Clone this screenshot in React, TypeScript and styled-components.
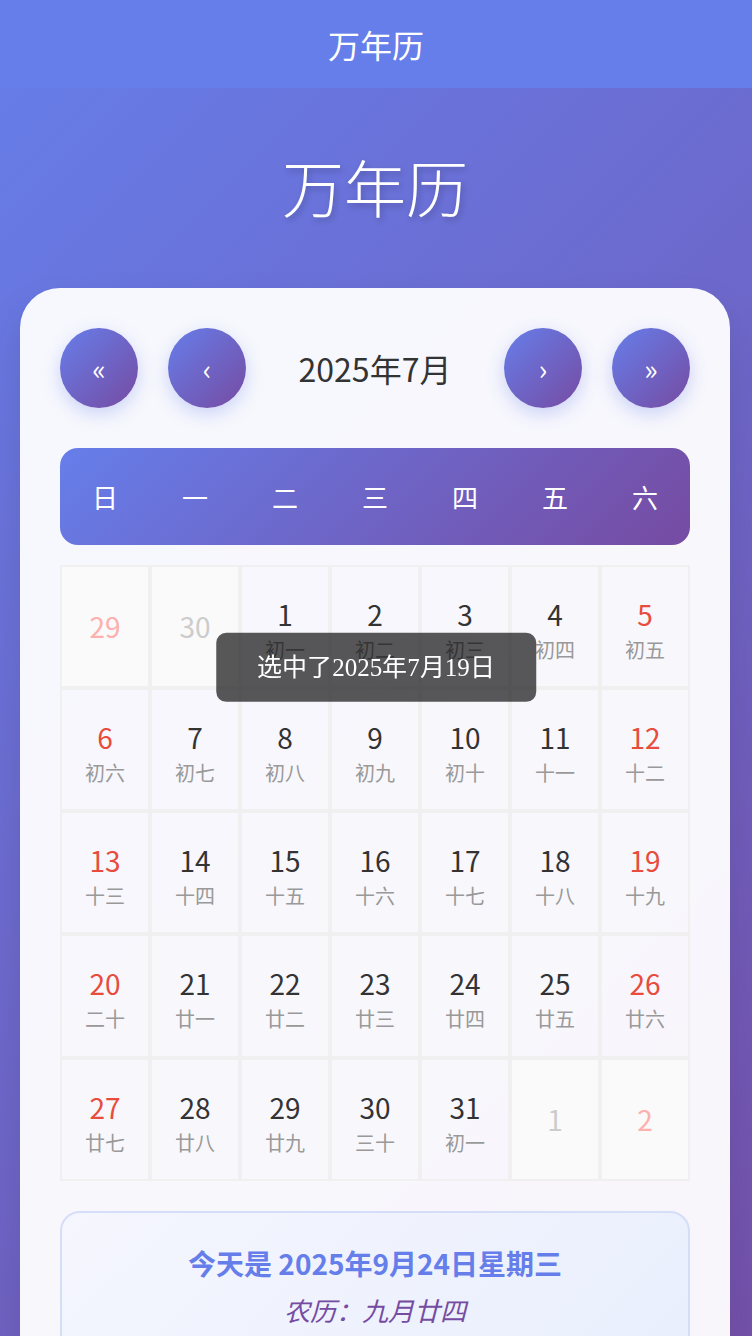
import React from "react";
import styled, { createGlobalStyle } from "styled-components";

const Global = createGlobalStyle`
  html, body {
    margin: 0;
    padding: 0;
  }
  body {
    font-family: "Noto Sans CJK SC", "Noto Sans", sans-serif;
    background: linear-gradient(135deg, #667eea 0%, #764ba2 100%);
    min-height: 100vh;
  }
  * { box-sizing: border-box; }
`;

const Page = styled.div`
  min-height: 100vh;
  display: flex;
  flex-direction: column;
`;

const TopBar = styled.header`
  height: 88px;
  background: #667eea;
  display: flex;
  align-items: center;
  justify-content: center;
  color: #fff;
  font-family: "Liberation Serif", serif;
  font-size: 32px;
`;

const Main = styled.main`
  width: 750px;
  padding: 0 20px 222px;
`;

const Title = styled.h1`
  margin: 0;
  padding: 55px 0 58px;
  text-align: center;
  color: #fff;
  font-size: 62px;
  line-height: 1.4;
  font-weight: 300;
  text-shadow: 2px 3px 6px rgba(0, 0, 0, 0.22);
`;

const Card = styled.section`
  background: rgba(255, 255, 255, 0.95);
  border-radius: 40px;
  padding: 40px;
  box-shadow: 0 20px 40px rgba(0, 0, 0, 0.1);
`;

const NavRow = styled.div`
  display: flex;
  align-items: center;
  justify-content: space-between;
  height: 80px;
`;

const NavGroup = styled.div`
  display: flex;
  gap: 30px;
`;

const NavButton = styled.button`
  width: 78px;
  height: 80px;
  border-radius: 50%;
  border: none;
  padding: 0;
  background: linear-gradient(135deg, #667eea 0%, #764ba2 100%);
  color: #fff;
  font-family: "Noto Sans CJK SC", sans-serif;
  font-size: 28px;
  display: flex;
  align-items: center;
  justify-content: center;
  box-shadow: 0 6px 18px rgba(102, 126, 234, 0.3);
  cursor: pointer;
`;

const MonthTitle = styled.div`
  font-size: 32px;
  color: #333;
`;

const WeekBar = styled.div`
  margin-top: 40px;
  display: grid;
  grid-template-columns: repeat(7, 1fr);
  padding: 30px 0;
  border-radius: 18px;
  background: linear-gradient(135deg, #667eea 0%, #764ba2 100%);
  color: #fff;
  font-size: 26px;
  text-align: center;
`;

const DayGrid = styled.div`
  margin-top: 20px;
  display: grid;
  grid-template-columns: repeat(7, 1fr);
  grid-auto-rows: 123.2px;
`;

const Cell = styled.div<{ $other?: boolean }>`
  border: 2px solid #f0f0f0;
  background: ${(p) => (p.$other ? "#fafafa" : "transparent")};
  padding-top: ${(p) => (p.$other ? "0" : "5px")};
  display: flex;
  flex-direction: column;
  align-items: center;
  justify-content: center;
`;

const DayNum = styled.div<{ $tone: "normal" | "weekend" | "other" | "otherWeekend" }>`
  font-size: 28px;
  line-height: 40px;
  color: ${(p) =>
    p.$tone === "weekend"
      ? "#e74c3c"
      : p.$tone === "other"
      ? "#cccccc"
      : p.$tone === "otherWeekend"
      ? "#fdb0ad"
      : "#333"};
`;

const Lunar = styled.div`
  margin-top: 1px;
  font-size: 20px;
  line-height: 29px;
  color: #999;
`;

const InfoBox = styled.div`
  margin-top: 30px;
  border: 2px solid #d6ddf8;
  border-radius: 20px;
  padding: 30px;
  background: linear-gradient(135deg, #f5f6fe 0%, #e9effd 100%);
  text-align: center;
`;

const TodayLine = styled.div`
  font-size: 28px;
  font-weight: 700;
  color: #667eea;
  line-height: 40px;
`;

const LunarLine = styled.div`
  margin-top: 8px;
  font-size: 26px;
  font-style: italic;
  color: #764ba2;
  line-height: 38px;
`;

const Toast = styled.div`
  position: fixed;
  left: 50%;
  top: 50%;
  transform: translate(-50%, -51%);
  background: rgba(0, 0, 0, 0.65);
  color: #fff;
  border-radius: 10px;
  padding: 17px 41px;
  font-family: "Liberation Serif", serif;
  font-size: 25px;
  line-height: 35px;
  white-space: nowrap;
`;

type Day = { d: number; lunar?: string; other?: boolean; col: number };

const lunarJuly = [
  "初一", "初二", "初三", "初四", "初五", "初六", "初七", "初八", "初九", "初十",
  "十一", "十二", "十三", "十四", "十五", "十六", "十七", "十八", "十九", "二十",
  "廿一", "廿二", "廿三", "廿四", "廿五", "廿六", "廿七", "廿八", "廿九", "三十", "初一",
];

const days: Day[] = [];
[29, 30].forEach((d, i) => days.push({ d, other: true, col: i }));
for (let i = 1; i <= 31; i++) {
  days.push({ d: i, lunar: lunarJuly[i - 1], col: (i + 1) % 7 });
}
[1, 2].forEach((d, i) => days.push({ d, other: true, col: 5 + i }));

const weekNames = ["日", "一", "二", "三", "四", "五", "六"];

export default function App() {
  return (
    <Page lang="zh-CN">
      <Global />
      <TopBar>万年历</TopBar>
      <Main>
        <Title>万年历</Title>
        <Card>
          <NavRow>
            <NavGroup>
              <NavButton>«</NavButton>
              <NavButton>‹</NavButton>
            </NavGroup>
            <MonthTitle>2025年7月</MonthTitle>
            <NavGroup>
              <NavButton>›</NavButton>
              <NavButton>»</NavButton>
            </NavGroup>
          </NavRow>
          <WeekBar>
            {weekNames.map((w) => (
              <div key={w}>{w}</div>
            ))}
          </WeekBar>
          <DayGrid>
            {days.map((day, idx) => {
              const weekend = day.col === 0 || day.col === 6;
              const tone = day.other
                ? weekend
                  ? "otherWeekend"
                  : "other"
                : weekend
                ? "weekend"
                : "normal";
              return (
                <Cell key={idx} $other={day.other}>
                  <DayNum $tone={tone}>{day.d}</DayNum>
                  {day.lunar && <Lunar>{day.lunar}</Lunar>}
                </Cell>
              );
            })}
          </DayGrid>
          <InfoBox>
            <TodayLine>今天是 2025年9月24日星期三</TodayLine>
            <LunarLine>农历：九月廿四</LunarLine>
          </InfoBox>
        </Card>
      </Main>
      <Toast>选中了2025年7月19日</Toast>
    </Page>
  );
}
